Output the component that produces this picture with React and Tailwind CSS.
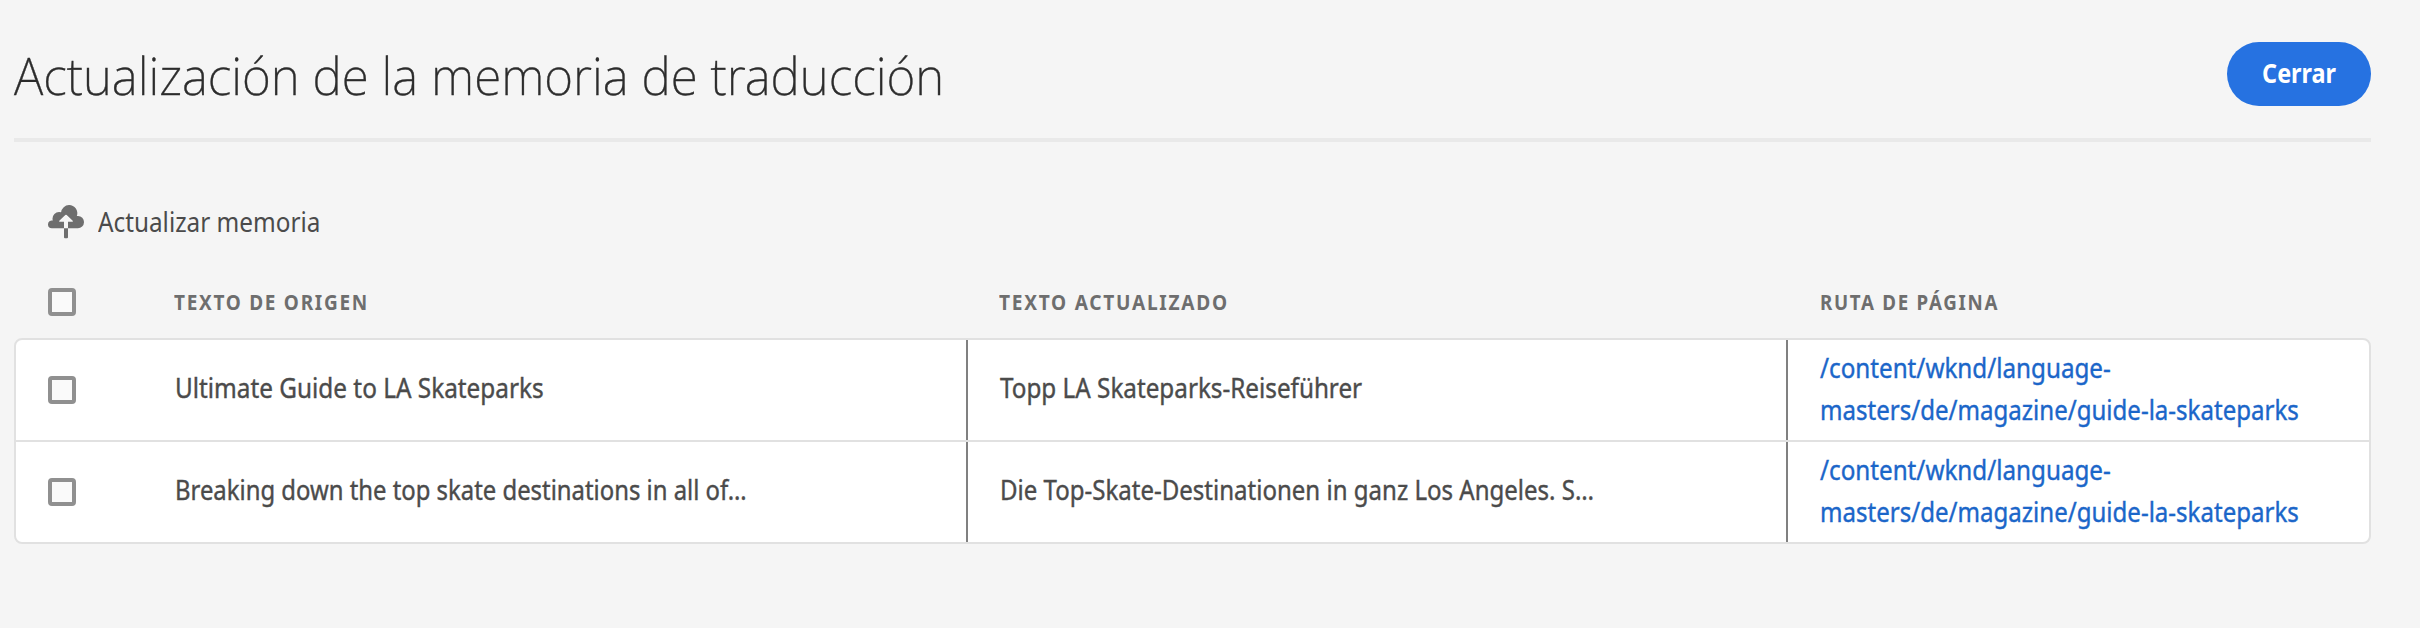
const rows = [
  {
    source: { text: "Ultimate Guide to LA Skateparks", fit: "scale-x-[0.901]" },
    updated: { text: "Topp LA Skateparks-Reiseführer", fit: "scale-x-[0.898]" },
  },
  {
    source: { text: "Breaking down the top skate destinations in all of…", fit: "scale-x-[0.884]" },
    updated: { text: "Die Top-Skate-Destinationen in ganz Los Angeles. S…", fit: "scale-x-[0.89]" },
  },
];

const columns = "grid grid-cols-[160px_792px_820px_584px]";

function Text({ className = "", children }) {
  return (
    <span className={`inline-block origin-left whitespace-nowrap ${className}`}>{children}</span>
  );
}

function Checkbox({ label }) {
  return (
    <span
      role="checkbox"
      aria-checked="false"
      aria-label={label}
      className="block size-7 rounded border-4 border-[#909090] bg-[#fafafa]"
    />
  );
}

function CloudUpload() {
  return (
    <svg className="h-[34px] w-9 shrink-0" viewBox="0 0 36 34" fill="#6e6e6e" aria-hidden="true">
      <path d="M16 23.200V16.800h-4.300a.6.600 0 0 1-.4-1l6-5.700a1 1 0 0 1 1.400 0l6 5.700a.6.600 0 0 1-.4 1H20v6.400h9.800a6.100 6.100 0 0 0 .2-12.200 6 6 0 0 0-1.200.1A8.200 8.200 0 0 0 21 0a8.300 8.300 0 0 0-7.900 7.300 6.500 6.500 0 0 0-2.100-.3 6.600 6.600 0 0 0-6.500 6.600c0 .7.100 1.300.3 1.900A3.900 3.900 0 0 0 0 19.400a3.900 3.900 0 0 0 4 3.800z" />
      <path d="M16 23.200h4v9a1 1 0 0 1-1 1h-2a1 1 0 0 1-1-1z" />
    </svg>
  );
}

function Heading({ children, className = "" }) {
  return (
    <Text className={`text-[21px] leading-7 font-bold tracking-[1.9px] text-[#6e6e6e] ${className}`}>
      {children}
    </Text>
  );
}

export default function App() {
  return (
    <main className="h-[628px] w-[2420px] bg-[#f5f5f5] pr-[49px] pl-[14px] font-['Noto_Sans','Open_Sans',sans-serif] text-[#4b4b4b]">
      <header className="flex h-[142px] items-start justify-between border-b-4 border-[#e9e9e9]">
        <h1 className="pt-[39px] text-[52px] leading-[72px] font-extralight text-[#2c2c2c] [-webkit-text-stroke:0.4px]">
          <Text className="scale-x-[0.953]">Actualización de la memoria de traducción</Text>
        </h1>
        <button className="mt-[42px] flex h-16 w-36 items-center justify-center rounded-full bg-[#2672e1] pb-[3px] text-[26px] leading-9 font-bold text-white">
          <span className="scale-x-[0.9]">Cerrar</span>
        </button>
      </header>

      <div className="flex h-[124px] items-start pt-[63px] pl-[34px]">
        <CloudUpload />
        <div className="-mt-[1px] ml-[14px] text-[27px] leading-9">
          <Text className="scale-x-[0.9]">Actualizar memoria</Text>
        </div>
      </div>

      <div className={`${columns} h-[72px] items-center`}>
        <div className="pl-[34px]"><Checkbox label="Seleccionar todo" /></div>
        <Heading className="scale-x-[0.905]">TEXTO DE ORIGEN</Heading>
        <div className="pl-[33px]"><Heading className="scale-x-[0.91]">TEXTO ACTUALIZADO</Heading></div>
        <div className="pl-[34px]"><Heading className="scale-x-[0.893]">RUTA DE PÁGINA</Heading></div>
      </div>

      <section className="h-[206px] divide-y-2 divide-[#e1e1e1] overflow-hidden rounded-lg border-2 border-[#e1e1e1] bg-white text-[27px] leading-[42px] [-webkit-text-stroke:0.4px]">
        {rows.map((row) => (
          <div key={row.source.text} className="box-content grid h-[100px] grid-cols-[158px_794px_820px_581px]">
            <div className="flex items-center pl-[32px]"><Checkbox label={row.source.text} /></div>
            <div className="flex items-center border-r-2 border-[#808080] pb-1 pl-[1px]">
              <Text className={row.source.fit}>{row.source.text}</Text>
            </div>
            <div className="flex items-center border-r-2 border-[#808080] pb-1 pl-[32px]">
              <Text className={row.updated.fit}>{row.updated.text}</Text>
            </div>
            <a href="#" className="flex flex-col pt-[7px] pl-[32px] text-[#1b66c9]">
              <Text className="scale-x-[0.897]">/content/wknd/language-</Text>
              <Text className="scale-x-[0.891]">masters/de/magazine/guide-la-skateparks</Text>
            </a>
          </div>
        ))}
      </section>
    </main>
  );
}
